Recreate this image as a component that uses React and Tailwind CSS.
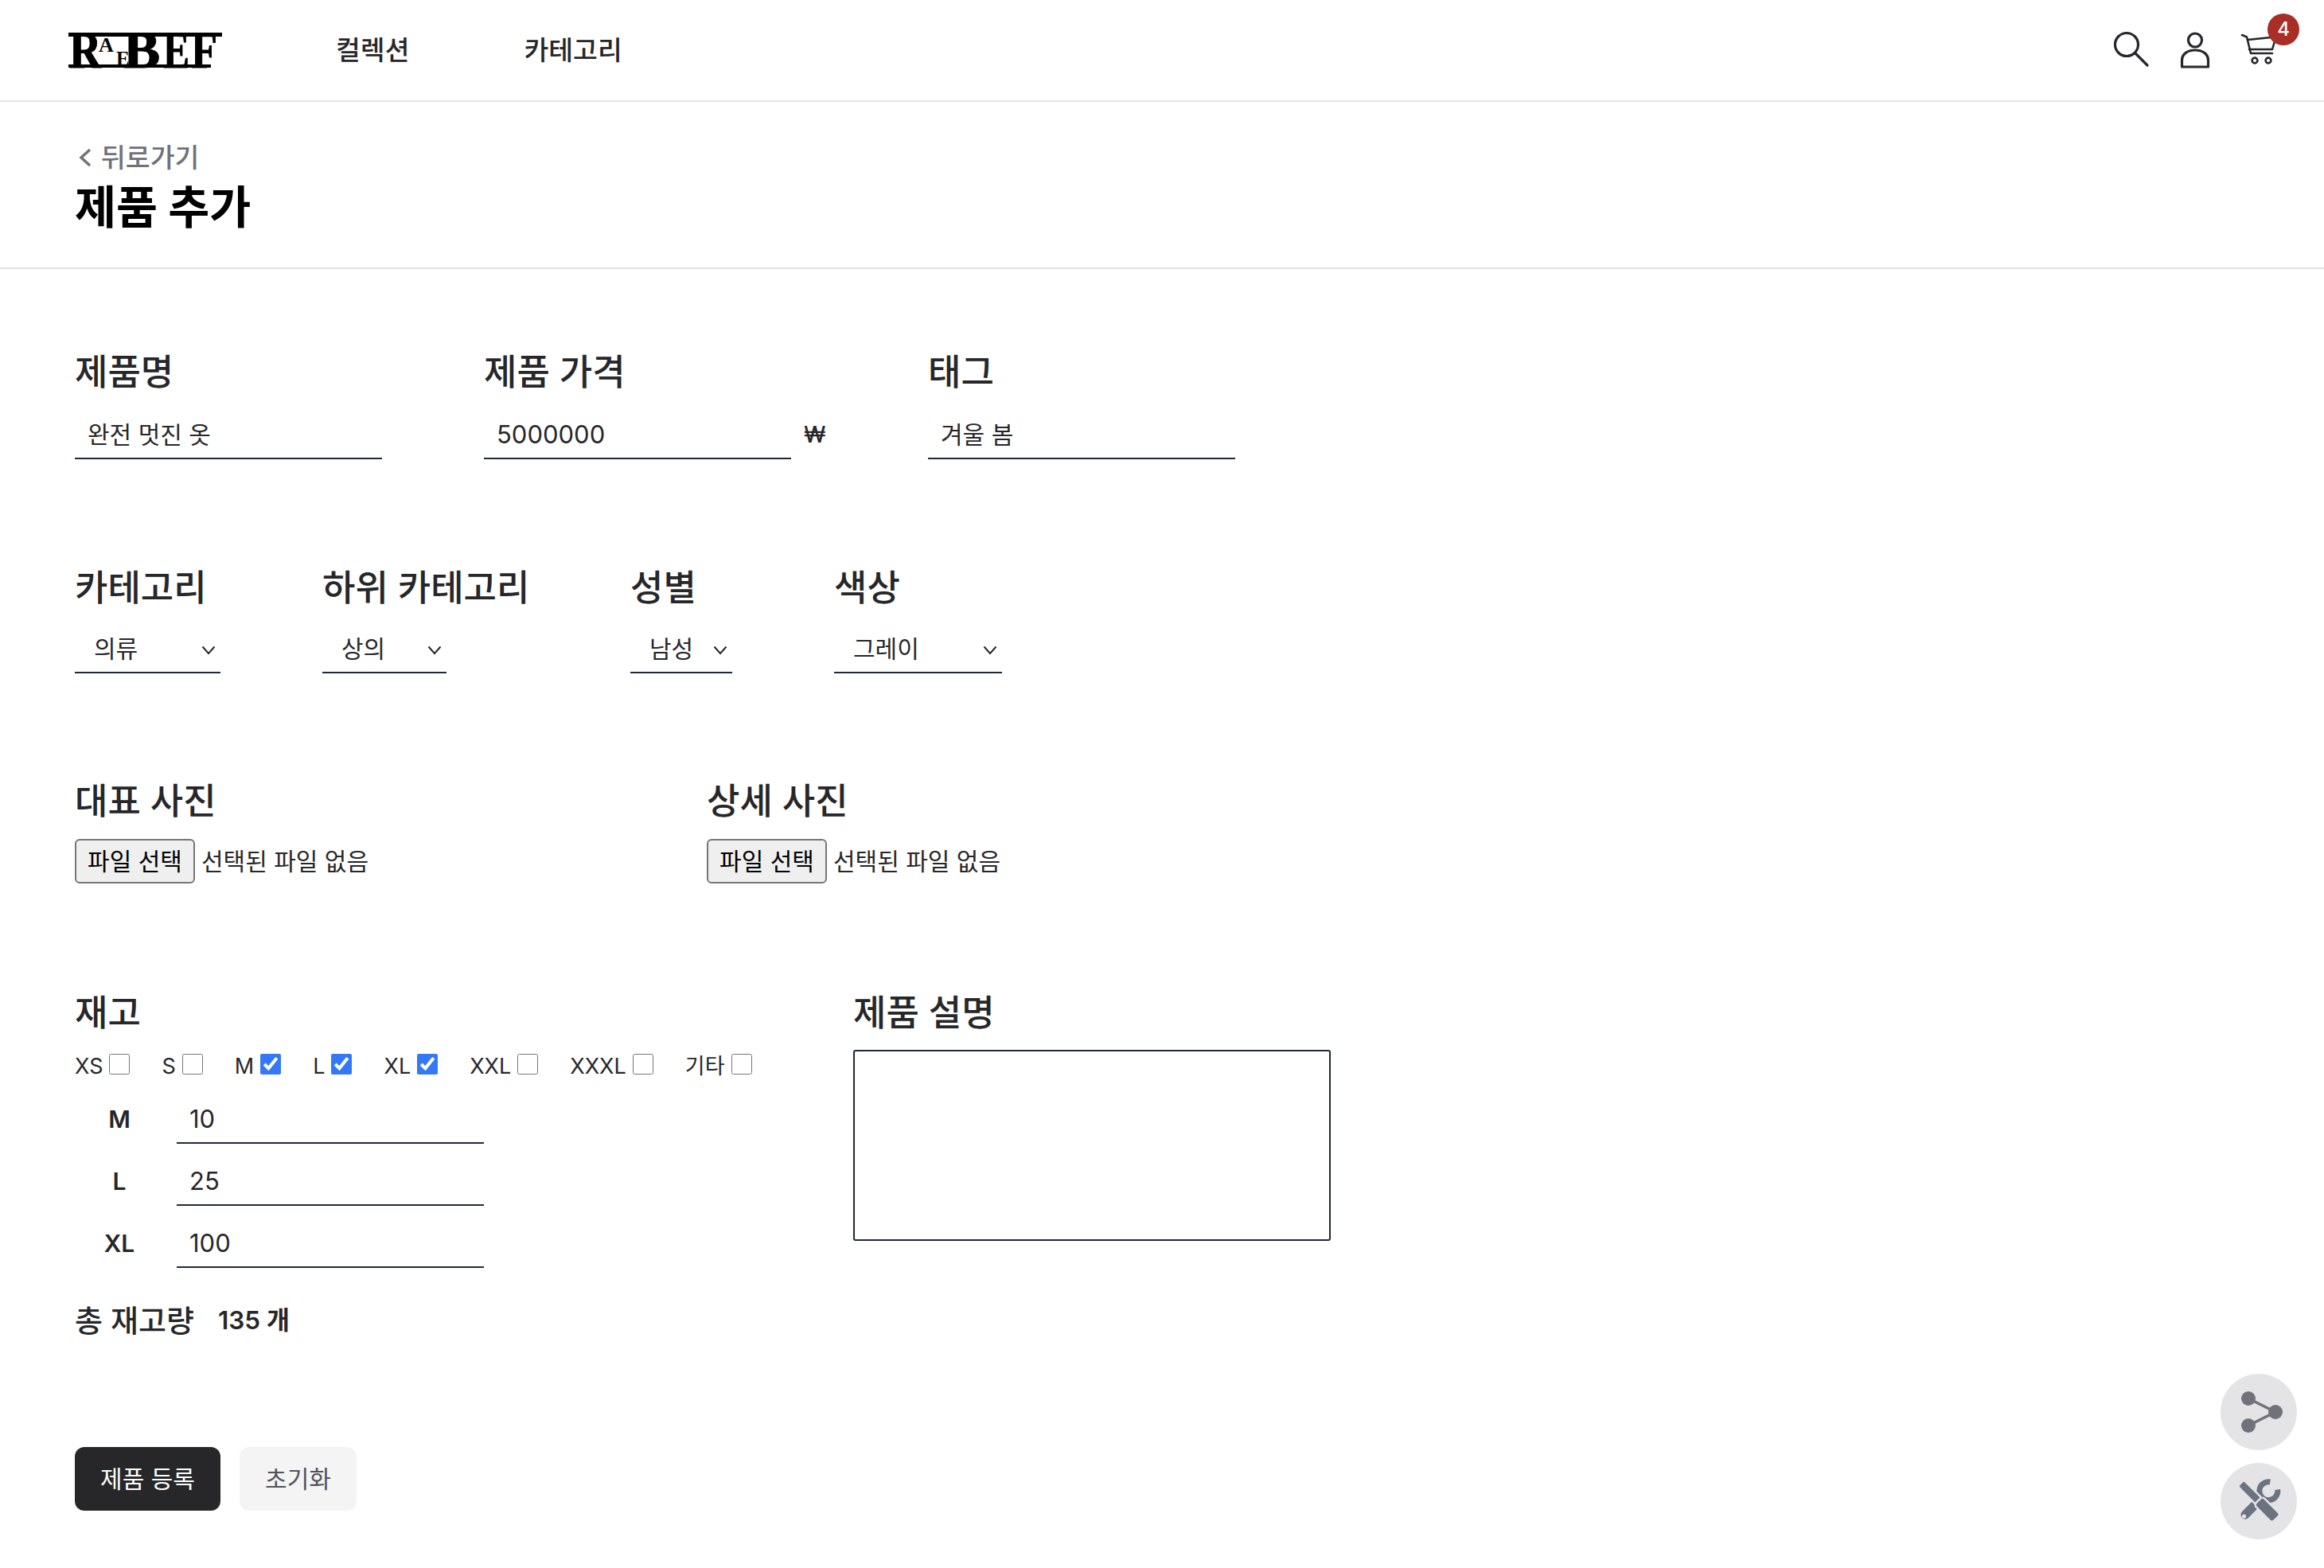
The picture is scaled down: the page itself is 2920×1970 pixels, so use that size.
import { useState } from "react"

const font = "font-['Inter','Noto_Sans_CJK_KR',sans-serif]"

const SIZES = [
  { key: "XS", on: false },
  { key: "S", on: false },
  { key: "M", on: true },
  { key: "L", on: true },
  { key: "XL", on: true },
  { key: "XXL", on: false },
  { key: "XXXL", on: false },
  { key: "기타", on: false },
]

function Label({ children }) {
  return <div className="h-[54px] leading-[56px] text-[45px] font-medium text-[#27272a] mb-[21px] whitespace-nowrap">{children}</div>
}

function TextField({ value, className = "" }) {
  return (
    <input
      type="text"
      defaultValue={value}
      className={`w-[386px] h-[62px] px-4 border-b-2 border-[#1f2937] text-[#27272a] outline-none ${className}`}
    />
  )
}

function Chevron() {
  return (
    <svg viewBox="0 0 18 12" className="absolute right-[6px] top-[25px] w-[18px] h-[12px] pointer-events-none" fill="none" stroke="#27272a" strokeWidth="2">
      <path d="M1.5 1.5 9 10l7.5-8.5" />
    </svg>
  )
}

function SelectField({ label, width, selectWidth, options }) {
  return (
    <div style={{ width }}>
      <Label>{label}</Label>
      <div className="relative" style={{ width: selectWidth }}>
        <select className="appearance-none w-full h-[60px] pl-6 border-b-2 border-[#1f2937] text-[30px] text-[#27272a] bg-white outline-none">
          {options.map(o => <option key={o}>{o}</option>)}
        </select>
        <Chevron />
      </div>
    </div>
  )
}

function FileField({ label, className = "" }) {
  return (
    <div className={className}>
      <Label>{label}</Label>
      <div className="flex items-center gap-2 text-[30px] text-[#27272a]">
        <button className="w-[151px] h-[56px] bg-[#efefef] border-2 border-[#767676] rounded-[6px] text-black text-[30px] whitespace-nowrap">파일 선택</button>
        <span>선택된 파일 없음</span>
      </div>
    </div>
  )
}

function Logo() {
  return (
    <div className="relative w-[193px] h-[44px] font-['Liberation_Serif',serif] font-bold text-black select-none">
      <div className="absolute left-0 top-0 w-full h-[5px] bg-black" />
      <div className="absolute left-0 bottom-0 w-[179px] h-[4px] bg-black" />
      <span className="absolute left-[1px] top-[-11px] origin-left scale-x-[0.85] text-[66px] leading-[66px] [-webkit-text-stroke:1px_black]">R</span>
      <span className="absolute left-[38px] top-[3px] text-[26px] leading-[26px]">A</span>
      <span className="absolute left-[60px] top-[20px] text-[25px] leading-[25px]">E</span>
      <span className="absolute left-[69px] top-[-11px] origin-left scale-x-[1.05] text-[66px] leading-[66px] [-webkit-text-stroke:1px_black]">B</span>
      <span className="absolute left-[119px] top-[-11px] origin-left scale-x-[0.75] text-[66px] leading-[66px] [-webkit-text-stroke:1px_black]">E</span>
      <span className="absolute left-[154px] top-[-11px] origin-left scale-x-[0.82] text-[66px] leading-[66px] [-webkit-text-stroke:1px_black]">F</span>
    </div>
  )
}

function HeaderIcons() {
  return (
    <div className="flex items-center gap-[26px]">
      <svg viewBox="0 0 56 56" className="w-[56px] h-[56px]" fill="none" stroke="#27272a" strokeWidth="3.2" strokeLinecap="round">
        <circle cx="22" cy="21" r="14.5" />
        <path d="M33 32l15 15" />
      </svg>
      <svg viewBox="0 0 56 56" className="w-[56px] h-[56px]" fill="none" stroke="#27272a" strokeWidth="3.2" strokeLinejoin="round">
        <circle cx="26" cy="15.5" r="8.5" />
        <path d="M9.5 49v-8c0-9 8-13 16.5-13s16.5 4 16.5 13v8z" />
      </svg>
      <div className="relative w-[56px] h-[56px]">
        <svg viewBox="0 0 56 56" className="w-[56px] h-[56px]" fill="none" stroke="#27272a" strokeWidth="2.6" strokeLinecap="round" strokeLinejoin="round">
          <path d="M3 9l6 2.5L14 32h27" />
          <path d="M10 15l29-3" />
          <path d="M44 17l-3 10H12" />
          <circle cx="19" cy="41" r="3.4" />
          <circle cx="36" cy="41" r="3.4" />
        </svg>
        <span className="absolute left-[35px] top-[-18px] w-[40px] h-[40px] rounded-full bg-[#a82e26] text-white text-[24px] font-medium flex items-center justify-center">4</span>
      </div>
    </div>
  )
}

function ShareIcon() {
  return (
    <svg viewBox="0 0 96 96" className="w-[96px] h-[96px]" fill="#71717a" stroke="#71717a">
      <path d="M35 31 69 48 35 65" fill="none" strokeWidth="3.5" />
      <circle cx="35" cy="31" r="9" stroke="none" />
      <circle cx="69" cy="48" r="9" stroke="none" />
      <circle cx="35" cy="65" r="9" stroke="none" />
    </svg>
  )
}

function ToolsIcon() {
  return (
    <svg viewBox="0 0 96 96" className="w-[96px] h-[96px]" fill="none">
      {/* 렌치 */}
      <path d="M62.3 24A11.5 11.5 0 1 0 71.7 33.5" stroke="#6b7280" strokeWidth="7" />
      <path d="M31 65 47 49" stroke="#6b7280" strokeWidth="11" strokeLinecap="round" />
      <circle cx="29.5" cy="67" r="2.6" fill="#e4e4e7" />
      {/* 드라이버 */}
      <g transform="rotate(45 48 48)">
        <rect x="16" y="42.5" width="32" height="11" rx="3" fill="#6b7280" stroke="#e4e4e7" strokeWidth="2.5" />
        <rect x="47" y="40.5" width="32" height="15" rx="4" fill="#6b7280" stroke="#e4e4e7" strokeWidth="2.5" />
      </g>
    </svg>
  )
}

export default function App() {
  const [sizes] = useState(SIZES)
  const stock = [
    { key: "M", qty: "10" },
    { key: "L", qty: "25" },
    { key: "XL", qty: "100" },
  ]

  return (
    <div className={`relative min-h-[1970px] bg-white ${font}`}>
      <header className="h-[128px] border-b-2 border-[#e4e4e7] flex items-center justify-between pl-[86px] pr-[50px]">
        <div className="flex items-center">
          <Logo />
          <nav className="flex gap-[144px] ml-[143px] text-[33.5px] font-medium text-[#27272a] whitespace-nowrap">
            <a>컬렉션</a>
            <a>카테고리</a>
          </nav>
        </div>
        <HeaderIcons />
      </header>

      <section className="h-[210px] border-b-2 border-[#e4e4e7] px-[94px] pt-[48px]">
        <a className="flex items-center h-[44px] text-[33.5px] font-medium text-[#71717a]">
          <svg viewBox="0 0 18 26" className="w-[18px] h-[26px] ml-[4px] mr-[11px]" fill="none" stroke="#71717a" strokeWidth="3.5">
            <path d="M15 3 4 13l11 10" />
          </svg>
          뒤로가기
        </a>
        <h1 className="mt-[7px] h-[68px] leading-[68px] text-[56.5px] font-bold text-black">제품 추가</h1>
      </section>

      <form className="px-[94px] pt-[102px]">
        <div className="flex gap-[128px]">
          <div>
            <Label>제품명</Label>
            <TextField value="완전 멋진 옷" className="text-[30px] pb-[2px]" />
          </div>
          <div>
            <Label>제품 가격</Label>
            <div className="flex items-center">
              <TextField value="5000000" className="text-[31px]" />
              <span className="w-[28px] ml-[16px] text-[28px] font-medium text-[#27272a]">₩</span>
            </div>
          </div>
          <div>
            <Label>태그</Label>
            <TextField value="겨울 봄" className="text-[30px] pb-[2px]" />
          </div>
        </div>

        <div className="flex gap-[128px] mt-[134px]">
          <SelectField label="카테고리" width={183} selectWidth={183} options={["의류"]} />
          <SelectField label="하위 카테고리" width={259} selectWidth={156} options={["상의"]} />
          <SelectField label="성별" width={128} selectWidth={128} options={["남성"]} />
          <SelectField label="색상" width={211} selectWidth={211} options={["그레이"]} />
        </div>

        <div className="flex mt-[133px]">
          <FileField label="대표 사진" className="w-[794px]" />
          <FileField label="상세 사진" />
        </div>

        <div className="flex mt-[136px]">
          <div className="w-[978px]">
            <div className="h-[54px] leading-[54px] text-[45px] font-medium text-[#27272a]">재고</div>
            <div className="flex gap-[40px] h-[32px] mt-[24px] text-[27px] text-[#27272a]">
              {sizes.map(s => (
                <label key={s.key} className="flex items-center gap-[8px]">
                  {s.key}
                  <input type="checkbox" defaultChecked={s.on} className="w-[26px] h-[26px] -mt-[6px] accent-[#3478f6]" />
                </label>
              ))}
            </div>
            <div className="flex flex-col gap-[16px] mt-[19px]">
              {stock.map(s => (
                <div key={s.key} className="flex items-center">
                  <span className="w-[112px] text-center text-[30px] font-semibold text-[#27272a]">{s.key}</span>
                  <input type="number" defaultValue={s.qty} className="ml-[16px] w-[386px] h-[62px] px-4 border-b-2 border-[#1f2937] text-[31px] text-[#27272a] outline-none" />
                </div>
              ))}
            </div>
            <div className="flex items-center mt-[39px] h-[54px] text-[#27272a] font-medium">
              <span className="text-[38px]">총 재고량</span>
              <span className="ml-[30px] text-[31.5px] font-semibold">135 개</span>
            </div>
          </div>
          <div>
            <div className="h-[54px] leading-[54px] text-[45px] font-medium text-[#27272a] mb-[19px]">제품 설명</div>
            <textarea className="block w-[600px] h-[240px] border-2 border-[#1f2937] rounded-[3px] outline-none resize-none" />
          </div>
        </div>

        <div className="flex gap-[24px] mt-[132px]">
          <button className="w-[183px] h-[80px] rounded-[12px] bg-[#27272a] text-white text-[30px]">제품 등록</button>
          <button className="w-[147px] h-[80px] rounded-[12px] bg-[#f4f4f5] text-[#52525b] text-[30px]">초기화</button>
        </div>
      </form>

      <div className="fixed right-[34px] bottom-[36px] flex flex-col gap-[16px]">
        <button className="w-[96px] h-[96px] rounded-full bg-[#e4e4e7]"><ShareIcon /></button>
        <button className="w-[96px] h-[96px] rounded-full bg-[#e4e4e7]"><ToolsIcon /></button>
      </div>
    </div>
  )
}
